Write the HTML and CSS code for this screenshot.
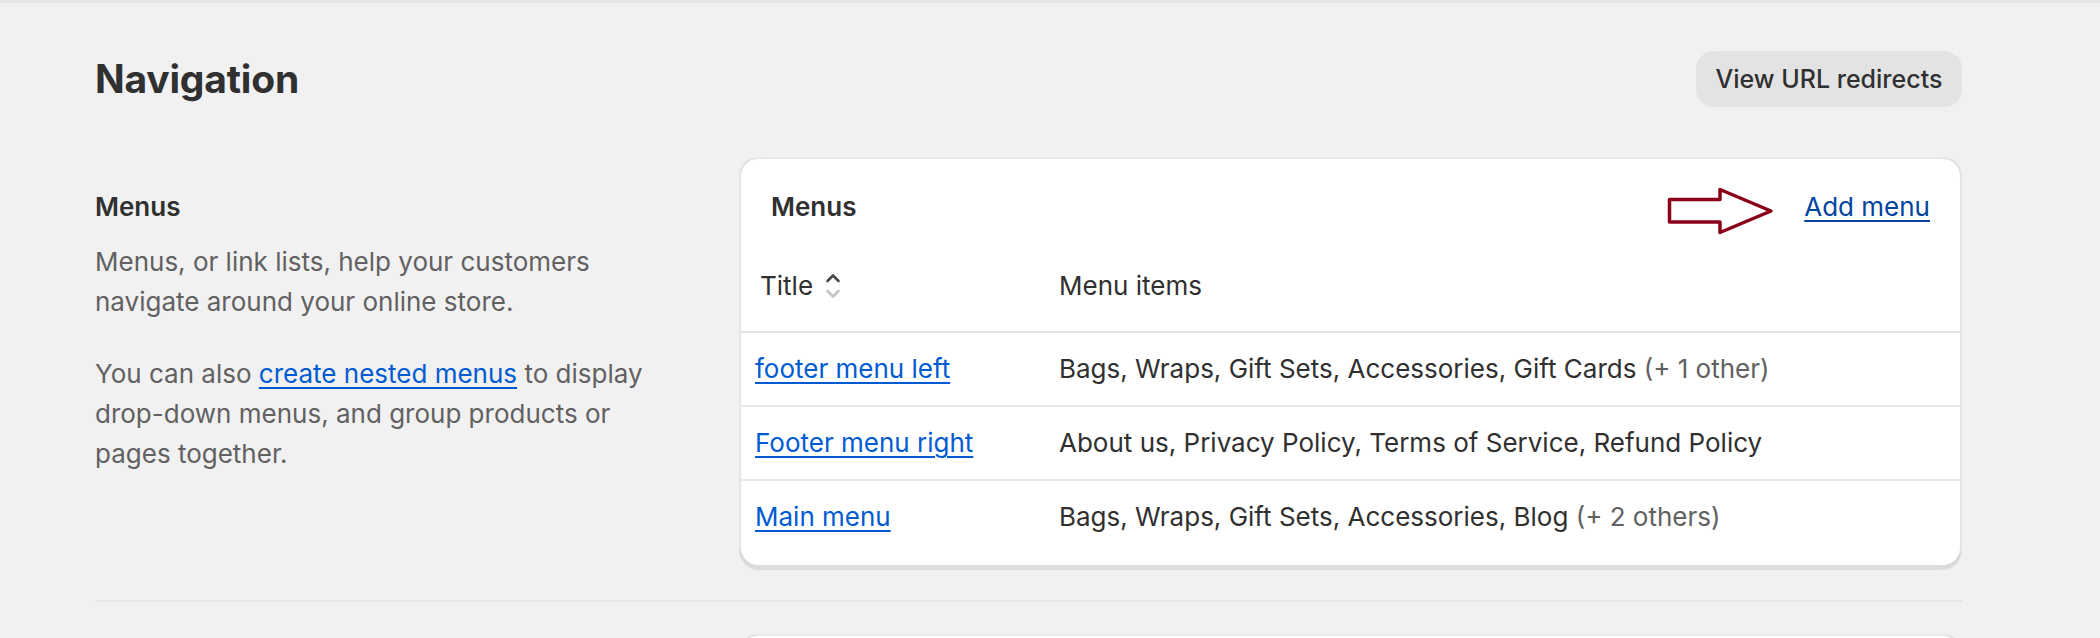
FILE: index.html
```html
<!DOCTYPE html>
<html lang="en">
<head>
<meta charset="utf-8">
<title>Navigation</title>
<link rel="stylesheet" href="styles.css">
</head>
<body>
<div class="topline"></div>
<main class="page">
  <header class="page-header">
    <h1 class="page-title">Navigation</h1>
    <button class="btn-secondary" type="button">View URL redirects</button>
  </header>

  <section class="annotated">
    <div class="annotated-info">
      <h2 class="section-title">Menus</h2>
      <p class="section-text">Menus, or link lists, help your customers navigate around your online store.</p>
      <p class="section-text">You can also <a class="link" href="#">create nested menus</a> to display drop-down menus, and group products or pages together.</p>
    </div>
    <div class="card">
      <div class="card-header">
        <h3 class="card-title">Menus</h3>
        <div class="card-actions">
          <svg class="annot-arrow" width="108" height="48" viewBox="0 0 108 48" aria-hidden="true">
            <path d="M2.5 12.5 H53 V2.5 L104 24 L53 45.5 V35 H2.5 Z" fill="none" stroke="#8a0018" stroke-width="3.5" stroke-linejoin="round"/>
          </svg>
          <a class="link-dark" href="#">Add menu</a>
        </div>
      </div>
      <table class="menu-table">
        <thead>
          <tr>
            <th class="col-title">
              <span class="sort-head">Title
                <svg class="sort-icon" width="16" height="26" viewBox="0 0 16 26" aria-hidden="true">
                  <path d="M2.5 8 L8 2.5 L13.5 8" fill="none" stroke="#4a4a4a" stroke-width="2.6" stroke-linecap="round" stroke-linejoin="round"/>
                  <path d="M2.5 18 L8 23.5 L13.5 18" fill="none" stroke="#c4c4c4" stroke-width="2.6" stroke-linecap="round" stroke-linejoin="round"/>
                </svg>
              </span>
            </th>
            <th class="col-items">Menu items</th>
          </tr>
        </thead>
        <tbody>
          <tr>
            <td class="col-title"><a class="link" href="#">footer menu left</a></td>
            <td class="col-items">Bags, Wraps, Gift Sets, Accessories, Gift Cards <span class="muted">(+ 1 other)</span></td>
          </tr>
          <tr>
            <td class="col-title"><a class="link" href="#">Footer menu right</a></td>
            <td class="col-items">About us, Privacy Policy, Terms of Service, Refund Policy</td>
          </tr>
          <tr>
            <td class="col-title"><a class="link" href="#">Main menu</a></td>
            <td class="col-items">Bags, Wraps, Gift Sets, Accessories, Blog <span class="muted">(+ 2 others)</span></td>
          </tr>
        </tbody>
      </table>
    </div>
  </section>

  <hr class="divider">

  <section class="annotated">
    <div class="annotated-info"></div>
    <div class="card card-next"></div>
  </section>
</main>
</body>
</html>
```

FILE: styles.css
```css
* {
  box-sizing: border-box;
}

html, body {
  margin: 0;
  padding: 0;
}

body {
  background: #f1f1f1;
  font-family: Inter, "Noto Sans", "Liberation Sans", sans-serif;
  font-size: 26px;
  line-height: 40px;
  color: #303030;
  overflow: hidden;
}

.topline {
  height: 3px;
  background: #e6e6e6;
}

.page {
  width: 1867px;
  margin-left: 95px;
  padding-top: 48px;
}

.page-header {
  display: flex;
  justify-content: space-between;
  align-items: center;
  height: 56px;
}

.page-title {
  margin: 0;
  font-size: 39px;
  line-height: 48px;
  font-weight: 700;
  color: #303030;
  letter-spacing: -0.2px;
}

.btn-secondary {
  width: 266px;
  height: 56px;
  border: 0;
  border-radius: 18px;
  background: #e3e3e3;
  color: #303030;
  font-family: inherit;
  font-size: 25px;
  font-weight: 500;
  padding: 0;
}

.annotated {
  display: flex;
  gap: 24px;
  margin-top: 50px;
}

.annotated-info {
  width: 620px;
  flex: none;
  padding: 30px 48px 0 0;
}

.section-title {
  margin: 0;
  font-size: 26px;
  line-height: 40px;
  font-weight: 600;
  color: #303030;
}

.section-text {
  margin: 15px 0 0;
  color: #616161;
}

.section-text + .section-text {
  margin-top: 32px;
}

.link {
  color: #005bd3;
  text-decoration: underline;
  text-underline-offset: 4px;
  text-decoration-thickness: 2px;
}

.link-dark {
  color: #00449e;
  text-decoration: underline;
  text-underline-offset: 4px;
  text-decoration-thickness: 2px;
}

.card {
  width: 1223px;
  flex: none;
  background: #ffffff;
  border-radius: 20px;
  padding-bottom: 14px;
  box-shadow:
    0 3px 0 0 rgba(26, 26, 26, 0.09),
    inset 0 2px 0 0 rgba(208, 208, 208, 0.45),
    inset 2px 0 0 0 rgba(204, 204, 204, 0.5),
    inset -2px 0 0 0 rgba(204, 204, 204, 0.5),
    inset 0 -2px 0 0 rgba(180, 180, 180, 0.45);
}

.card-header {
  display: flex;
  justify-content: space-between;
  align-items: center;
  padding: 30px 32px 0;
}

.card-title {
  margin: 0;
  font-size: 26px;
  line-height: 40px;
  font-weight: 600;
}

.card-actions {
  display: flex;
  align-items: flex-start;
  gap: 29px;
}

.annot-arrow {
  display: block;
  margin-bottom: -8px;
}

.menu-table {
  width: 100%;
  border-collapse: collapse;
  margin-top: 0;
}

.menu-table th {
  text-align: left;
  font-weight: 400;
  padding: 39px 16px 25px;
  border-bottom: 2px solid #e3e3e3;
  color: #303030;
}

.menu-table td {
  padding: 16px;
  white-space: nowrap;
}

.menu-table tbody tr + tr td {
  border-top: 2px solid #e8e8e8;
}

.col-title {
  width: 304px;
}

.sort-head {
  display: inline-flex;
  align-items: center;
  gap: 12px;
  padding-left: 5px;
}

.sort-icon {
  display: block;
}

.muted {
  color: #616161;
}

.divider {
  margin: 33px 0 0;
  border: 0;
  height: 2px;
  background: #e6e6e6;
}

.annotated + .divider + .annotated {
  margin-top: 32px;
}

.card-next {
  height: 240px;
}
```
